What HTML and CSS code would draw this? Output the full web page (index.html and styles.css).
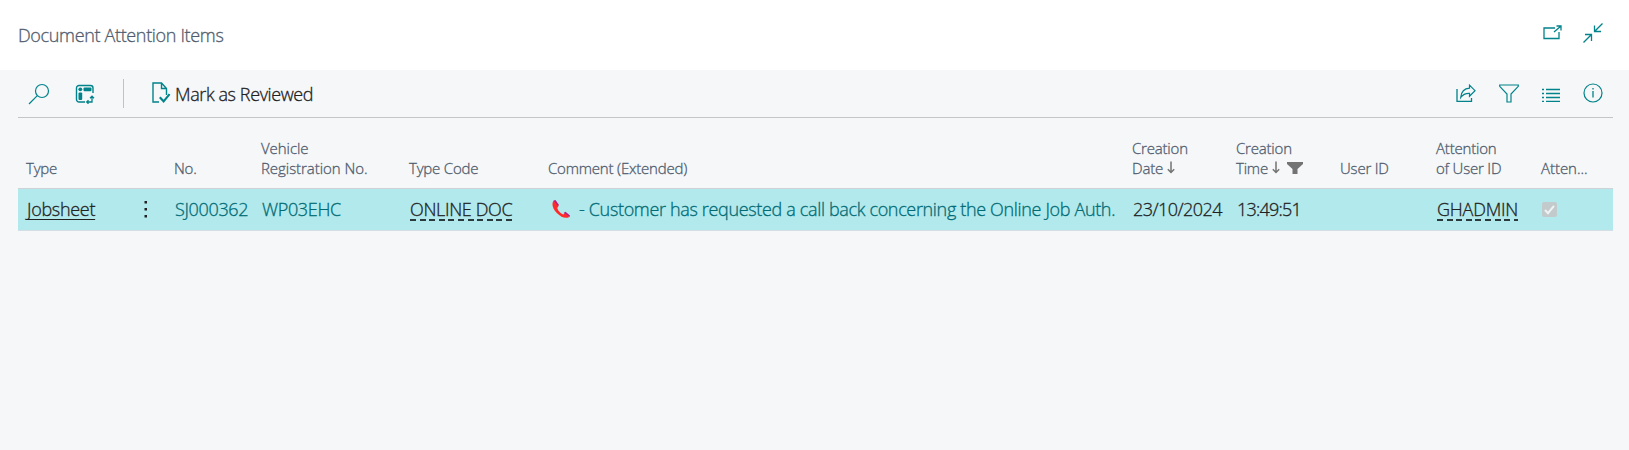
FILE: index.html
```html
<!DOCTYPE html>
<html lang="en">
<head>
<meta charset="utf-8">
<title>Document Attention Items</title>
<link rel="stylesheet" href="styles.css">
</head>
<body>
<header class="titlebar">
  <h1 class="title">Document Attention Items</h1>
  <div class="window-actions">
    <svg class="icon" width="20" height="16" viewBox="0 0 20 16"><path d="M12 3H1v10.500h15V7M11 7l7-6M13.500 1H18v4.500" stroke-width="1.300"/></svg>
    <svg class="icon" width="20" height="20" viewBox="0 0 20 20"><path d="M19.500 .5l-8 8M11.500 2.500v6H18M.5 19.500l8-8M2 11.500h6.500V18" stroke-width="1.300"/></svg>
  </div>
</header>
<main class="content">
  <div class="toolbar">
    <svg class="icon search" width="22" height="22" viewBox="0 0 22 22"><circle cx="14" cy="8" r="6.500" stroke-width="1.200"/><path d="M9.300 12.700L1 21" stroke-width="1.200"/></svg>
    <svg class="icon analyse" width="20" height="20" viewBox="0 0 20 20"><path d="M10 18H4A2.500 2.500 0 0 1 1.500 15.500V4A2.500 2.500 0 0 1 4 1.500h11.500A2.500 2.500 0 0 1 18 4v5" stroke-width="1.400"/><path d="M12 18h5v-5.500M13.500 16.200L11.700 18l1.800 1.800M15 14.200l2-2 2 2" stroke-width="1.300"/><g class="solid"><circle cx="5.300" cy="5.300" r="1.900"/><rect x="8.500" y="3.500" width="8" height="3.700" rx="1"/><rect x="3.500" y="8.500" width="3.700" height="7.500" rx="1"/></g></svg>
    <span class="divider"></span>
    <button class="action" type="button">
      <svg class="icon" width="20" height="22" viewBox="0 0 20 22"><path d="M8 20H2V1h8.500l5 5.500v6.500M10.500 1v5.500h5" stroke-width="1.400"/><path d="M8.800 15.300l3.800 4 6-7.200" stroke-width="2.100"/></svg>
      <span>Mark as Reviewed</span>
    </button>
    <div class="tools">
      <svg class="icon" width="20" height="19" viewBox="0 0 20 19"><path d="M1 5v12.300h14.500V14" stroke-width="1.300"/><path d="M13.500 1.200L19 6.700l-5.500 5.500V9.300c-4-.2-6.500.9-8.800 4.200C5.200 8.300 8 4.600 13.500 4.200z" stroke-width="1.200"/></svg>
      <svg class="icon" width="20" height="19" viewBox="0 0 20 19"><path d="M.7 1h18.600v1.300L12 10v8H8v-8L.7 2.300z" stroke-width="1.200"/></svg>
      <svg class="icon list" width="18" height="14" viewBox="0 0 18 14"><path d="M0 1.500h2m2 0h14M0 5.500h2m2 0h14M0 9.500h2m2 0h14M0 13.500h2m2 0h14" stroke-width="1.300"/></svg>
      <svg class="icon info" width="20" height="20" viewBox="0 0 20 20"><circle cx="10" cy="10" r="9" stroke-width="1.200"/><path d="M10 8v6.500M10 5v1.500" stroke-width="1.300"/></svg>
    </div>
  </div>
  <div class="table">
    <div class="row head">
      <div class="cell">Type</div>
      <div class="cell"></div>
      <div class="cell">No.</div>
      <div class="cell wide">Vehicle<br>Registration No.</div>
      <div class="cell">Type Code</div>
      <div class="cell">Comment (Extended)</div>
      <div class="cell">Creation<br>Date<svg class="sort" width="8" height="13" viewBox="0 0 8 13"><path d="M4 .5v11M.8 8.300L4 11.500l3.200-3.200"/></svg></div>
      <div class="cell">Creation<br>Time<svg class="sort" width="8" height="13" viewBox="0 0 8 13"><path d="M4 .5v11M.8 8.300L4 11.500l3.200-3.200"/></svg><svg class="filtered" width="16" height="12" viewBox="0 0 16 12"><path d="M0 0h16v2L10.500 7v5h-5V7L0 2z"/></svg></div>
      <div class="cell">User ID</div>
      <div class="cell">Attention<br>of User ID</div>
      <div class="cell wide">Atten...</div>
    </div>
    <div class="row body">
      <div class="cell"><a class="open">Jobsheet</a></div>
      <div class="cell menu"><svg width="4" height="18" viewBox="0 0 4 18"><path d="M.5 1h2.500v2.500H.5zM.5 8h2.500v2.500H.5zM.5 15h2.500v2.500H.5z"/></svg></div>
      <div class="cell teal">SJ000362</div>
      <div class="cell teal">WP03EHC</div>
      <div class="cell"><a class="lookup">ONLINE DOC</a></div>
      <div class="cell teal comment"><svg width="18" height="18" viewBox="0 0 18 18"><path class="phone-edge" d="M1.500.5L3.500 0l3.500 5-1.200 1.500-3-3zM11.500 13l2-1.200 4.500 3.700-.7 1.700z"/><path class="phone" d="M1.500.7C-.5 3.500.3 8.500 4.800 13s9 6 12.400 4l-4-3.500-2 1.100c-2.300-.8-5.100-3.600-6-6.500L6.400 6.200z"/></svg><span>- Customer has requested a call back concerning the Online Job Auth.</span></div>
      <div class="cell date">23/10/2024</div>
      <div class="cell time">13:49:51</div>
      <div class="cell"></div>
      <div class="cell"><a class="lookup user">GHADMIN</a></div>
      <div class="cell"><span class="checkbox"><svg width="15" height="15" viewBox="0 0 15 15"><path d="M3 8l3 3.200 6-7.400"/></svg></span></div>
    </div>
  </div>
</main>
</body>
</html>
```
FILE: styles.css
```css
* { box-sizing: border-box; }
body {
  margin: 0;
  height: 450px;
  display: flex;
  flex-direction: column;
  background: #fff;
  font-family: "Open Sans", "Noto Sans", sans-serif;
  font-weight: 300;
  font-size: 18px;
  letter-spacing: -0.34px;
  -webkit-text-stroke: 0.3px currentColor;
  color: #212121;
  overflow: hidden;
}
svg { display: block; flex: none; }
.icon { fill: none; stroke: #00838a; }
.icon .solid { fill: #00838a; stroke: none; }

.titlebar {
  height: 70px;
  padding: 0 26px 0 18px;
  display: flex;
  align-items: center;
  justify-content: space-between;
}
.title { margin: 0 0 1px; font: inherit; color: #505c6d; line-height: 24px; }
.window-actions { display: flex; align-items: center; gap: 20px; padding-bottom: 4px; }

.content { flex: 1; padding: 0 16px 0 18px; background: #f5f7f9; }
.toolbar {
  height: 48px;
  display: flex;
  align-items: center;
  border-bottom: 1px solid #c3c5c9;
  padding: 0 10px 0 10px;
}
.analyse { margin-left: 25px; }
.divider { width: 1px; height: 29px; margin-left: 28px; background: #bfc2c6; }
.action {
  display: flex;
  align-items: center;
  gap: 4px;
  margin-left: 27px;
  padding: 0;
  border: 0;
  background: none;
  font: inherit;
  letter-spacing: -0.4px;
  color: #212121;
}
.action svg { margin-bottom: 2px; }
.tools { margin-left: auto; display: flex; align-items: center; gap: 23px; padding-bottom: 1px; }
.list { margin-top: 4px; }
.info { margin-bottom: 1px; }

.row {
  display: grid;
  grid-template-columns: 106px 42px 87px 148px 139px 584px 104px 104px 96px 105px 80px;
}
.cell { padding-left: 8px; white-space: nowrap; }
.head {
  height: 71px;
  align-items: end;
  padding-bottom: 10px;
  border-bottom: 1px solid #cfd3d8;
  font-size: 15px;
  line-height: 20px;
  letter-spacing: -0.2px;
  color: #505c6d;
}
.wide { letter-spacing: -0.05px; }
.sort, .filtered { display: inline-block; }
.sort { margin-left: 4px; fill: none; stroke: #737373; stroke-width: 1.5; }
.filtered { margin-left: 7px; fill: #737373; vertical-align: 0; }
.body {
  height: 42px;
  align-items: center;
  padding-bottom: 1px;
  line-height: 24px;
  background: #b2e9ec;
  border-bottom: 1px solid #d5dfe3;
}
.body .cell { padding-left: 9px; }
.teal { color: #006b75; }
.menu svg { margin-left: 11px; fill: #212121; }
.open { text-decoration: underline; text-decoration-thickness: 1px; text-underline-offset: 3px; text-decoration-skip-ink: none; letter-spacing: -0.3px; }
.lookup {
  display: block;
  width: max-content;
  height: 24px;
  line-height: 24px;
  background: repeating-linear-gradient(90deg, #2b3a3d 0 6px, transparent 6px 9.6px) 0 22px / 100% 2px no-repeat;
}
.user { letter-spacing: -0.2px; }
.comment { display: flex; align-items: center; gap: 9px; }
.body .comment { padding-left: 12px; }
.phone { fill: #ff2b2b; }
.phone-edge { fill: #c2197d; }
.date { letter-spacing: -0.55px; }
.time { letter-spacing: -0.78px; }
.checkbox { display: block; width: 15px; height: 15px; border-radius: 2px; background: #c3cacc; }
.checkbox path { fill: none; stroke: #eef3f4; stroke-width: 2; }
```
